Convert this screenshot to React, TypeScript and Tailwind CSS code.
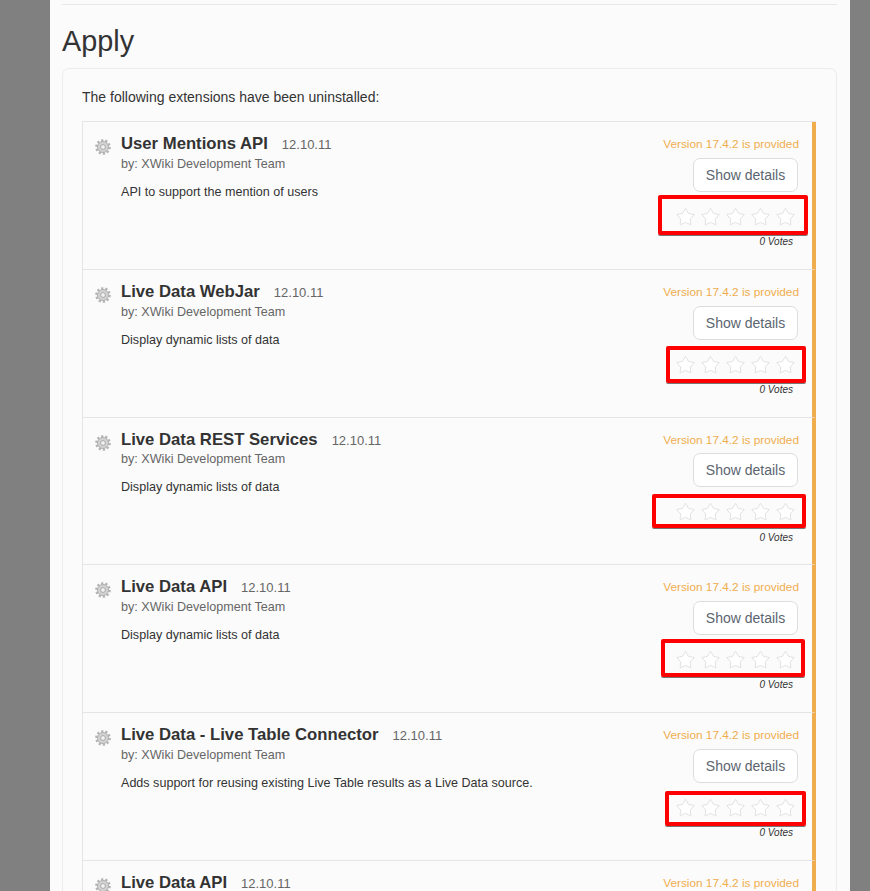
const extensions = [
  { name: 'User Mentions API', desc: 'API to support the mention of users', box: '-left-[17px] -right-[12px] -top-[12px] -bottom-[8px]' },
  { name: 'Live Data WebJar', desc: 'Display dynamic lists of data', box: '-left-[9px] -right-[10px] -top-[9px] -bottom-[8px]' },
  { name: 'Live Data REST Services', desc: 'Display dynamic lists of data', box: '-left-[23px] -right-[10px] -top-[8px] -bottom-[6px]' },
  { name: 'Live Data API', desc: 'Display dynamic lists of data', box: '-left-[14px] -right-[9px] -top-[11px] -bottom-[7px]' },
  { name: 'Live Data - Live Table Connector', desc: 'Adds support for reusing existing Live Table results as a Live Data source.', box: '-left-[10px] -right-[10px] -top-[7px] -bottom-[8px]' },
  { name: 'Live Data API', desc: 'Display dynamic lists of data', box: '' },
];

const Gear = () => (
  <svg viewBox="0 0 24 24" className="w-4 h-4 shrink-0 mt-[7px]">
    <circle cx="12" cy="12" r="10" fill="none" stroke="#b4b4b4" strokeWidth="3.500" strokeDasharray="3.400 2.880" />
    <circle cx="12" cy="12" r="8.300" fill="#d2d2d2" stroke="#a6a6a6" strokeWidth="1.200" />
    <circle cx="12" cy="12" r="3.600" fill="#f2f2f2" stroke="#9c9c9c" strokeWidth="1.200" />
  </svg>
);

const Star = () => (
  <svg viewBox="0 0 24 24" className="w-[21px] h-[20px]">
    <polygon
      fill="#ffffff"
      stroke="#e2e2e2"
      strokeWidth="1.200"
      strokeLinejoin="round"
      points="12,1.500 15.500,7.600 22.500,9.100 17.700,14.400 18.500,21.400 12,18.500 5.500,21.400 6.300,14.400 1.500,9.100 8.500,7.600"
    />
  </svg>
);

const ExtensionRow = ({ ext }: { ext: (typeof extensions)[number] }) => (
  <div className="flex justify-between h-[147.75px] border-b border-[#e5e5e5] border-r-4 border-r-[#f0ad4e] pl-[12px] pr-[13px] pt-[10px]">
    <div className="flex gap-[10px]">
      <Gear />
      <div>
        <div className="flex items-baseline gap-[14px] leading-[24px]">
          <span className="text-[16.700px] font-bold text-[#333333]">{ext.name}</span>
          <span className="text-[13px] text-[#666666]">12.10.11</span>
        </div>
        <div className="text-[12.600px] leading-[16px] text-[#666666] -mt-[1.300px]">by: XWiki Development Team</div>
        <p className="text-[12.570px] leading-[20px] mt-[10px] text-[#333333]">{ext.desc}</p>
      </div>
    </div>
    <div className="flex flex-col items-end pt-[2px]">
      <div className="text-[11.800px] leading-[20px] text-[#f0ad4e]">Version 17.4.2 is provided</div>
      <button className="mt-[3.700px] mr-px h-[34px] w-[105px] rounded-[7px] border border-[#dddddd] bg-white text-sm text-[#5b6570]">
        Show details
      </button>
      <div className="relative mt-[15px] mr-[3px] flex gap-[4px]">
        <Star />
        <Star />
        <Star />
        <Star />
        <Star />
        {ext.box && (
          <div className={`absolute ${ext.box} border-4 border-[#ff0000] rounded-[2px] shadow-[0_1px_0_#777777]`} />
        )}
      </div>
      <div className="text-[10px] italic leading-[12px] text-[#333333] mt-[9.300px] mr-[6px]">0 Votes</div>
    </div>
  </div>
);

export default function App() {
  return (
    <div className="h-[891px] overflow-hidden bg-[#808080] pl-[50px] pr-[20px] font-['Liberation_Sans',Arial,sans-serif]">
      <div className="h-full bg-[#fbfbfb] pl-[12px] pr-[13px] pt-[4px]">
        <div className="border-t border-[#e8e8e8]" />
        <h1 className="text-[28.800px] font-normal leading-[33px] text-[#333333] mt-[20px] mb-[10px]">Apply</h1>
        <div className="rounded-[7px] border border-[#ececec] pl-[19px] pr-[20px] pt-[18px]">
          <p className="text-sm leading-[20px] text-[#333333] mb-[14.200px]">The following extensions have been uninstalled:</p>
          <div className="border-t border-l border-[#e5e5e5]">
            {extensions.map((ext, i) => (
              <ExtensionRow key={i} ext={ext} />
            ))}
          </div>
        </div>
      </div>
    </div>
  );
}
